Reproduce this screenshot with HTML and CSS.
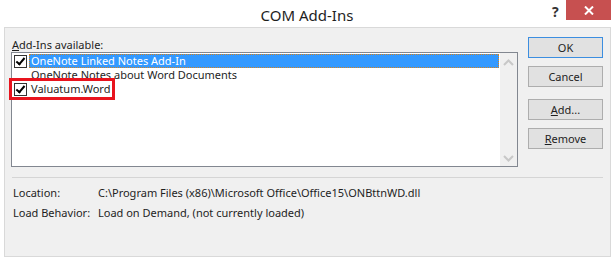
FILE: index.html
```html
<!DOCTYPE html>
<html lang="en">
<head>
  <meta charset="UTF-8" />
  <title>COM Add-Ins</title>
  <link rel="stylesheet" href="styles.css">
</head>
<body>
  <div class="ventana">
    <div class="titulo">
      <span class="titulo-texto">COM Add-Ins</span>
      <span class="ayuda">?</span>
      <span class="cerrar">
        <svg width="10" height="9" viewBox="0 0 10 9"><path d="M1 0.5 L9 8.5 M9 0.5 L1 8.5" stroke="#fff" stroke-width="2"/></svg>
      </span>
    </div>

    <div class="cliente">
      <div class="arriba">
        <div class="izquierda">
          <div class="etiqueta"><u>A</u>dd-Ins available:</div>
          <div class="lista">
            <div class="items">
              <div class="item">
                <span class="check marcado"></span>
                <span class="nombre activo">OneNote Linked Notes Add-In</span>
              </div>
              <div class="item">
                <span class="check"></span>
                <span class="nombre">OneNote Notes about Word Documents</span>
              </div>
              <div class="item">
                <span class="check marcado"></span>
                <span class="nombre">Valuatum.Word</span>
              </div>
              <div class="marca-roja"></div>
            </div>
            <div class="scroll">
              <svg width="11" height="7" viewBox="0 0 11 7"><path d="M1 6 L5.5 1.5 L10 6" fill="none" stroke="#c8c8c8" stroke-width="2"/></svg>
              <svg width="11" height="7" viewBox="0 0 11 7"><path d="M1 1 L5.5 5.5 L10 1" fill="none" stroke="#c8c8c8" stroke-width="2"/></svg>
            </div>
          </div>
        </div>

        <div class="botones">
          <button class="boton defecto">OK</button>
          <button class="boton">Cancel</button>
          <button class="boton separado"><u>A</u>dd...</button>
          <button class="boton"><u>R</u>emove</button>
        </div>
      </div>

      <div class="separador"></div>

      <div class="info">
        <div class="fila"><span class="clave">Location:</span><span>C:\Program Files (x86)\Microsoft Office\Office15\ONBttnWD.dll</span></div>
        <div class="fila"><span class="clave">Load Behavior:</span><span>Load on Demand, (not currently loaded)</span></div>
      </div>
    </div>
  </div>
</body>
</html>
```

FILE: styles.css
```css
/* Dialogo estilo Windows 8 */
body {
  margin: 0;
  background: #fff;
  font-family: 'Noto Sans', 'Open Sans', sans-serif;
  font-size: 11px;
  color: #1e1e1e;
}
.ventana {
  width: 614px;
  height: 260px;
  background: #fff;
  display: flex;
  flex-direction: column;
}
.titulo {
  height: 27px;
  position: relative;
  display: flex;
  justify-content: center;
  align-items: center;
}
.titulo-texto {
  font-size: 15px;
  color: #1e1e1e;
  margin-top: 2px;
}
.ayuda {
  position: absolute;
  left: 552px;
  top: 2px;
  font-weight: bold;
  font-size: 14px;
  color: #333;
}
.cerrar {
  position: absolute;
  left: 566px;
  top: 0;
  width: 45px;
  height: 20px;
  background: #c75050;
  display: flex;
  align-items: center;
  justify-content: center;
}
.cliente {
  margin: 0 3px 3px 4px;
  flex: 1;
  background: #f0f0f0;
  border: 1px solid #d9d9d9;
  display: flex;
  flex-direction: column;
  padding: 0 7px 0 6px;
}
.arriba {
  display: flex;
  gap: 10px;
}
.izquierda {
  width: 508px;
}
.etiqueta {
  margin: 9px 0 0 1px;
  height: 15px;
  line-height: 15px;
}
.lista {
  height: 113px;
  border: 1px solid #828790;
  background: #fff;
  display: flex;
}
.items {
  flex: 1;
  position: relative;
  padding-top: 1px;
}
.item {
  height: 14px;
  display: flex;
  align-items: center;
}
.check {
  width: 11px;
  height: 11px;
  margin: 0 2px;
  border: 1px solid #fff;
  background: #fff;
  position: relative;
}
.check.marcado {
  border-color: #333;
}
.check.marcado::after {
  content: "";
  position: absolute;
  left: 3px;
  top: 0px;
  width: 3px;
  height: 7px;
  border: solid #000;
  border-width: 0 2px 2px 0;
  transform: rotate(40deg);
}
.nombre {
  height: 14px;
  line-height: 14px;
  padding: 0 2px;
  white-space: nowrap;
}
.nombre.activo {
  flex: 1;
  background: #3399ff;
  color: #fff;
  outline: 1px dotted #d4821e;
  outline-offset: -1px;
  margin-right: 1px;
}
.marca-roja {
  position: absolute;
  left: -3px;
  top: 25px;
  width: 100px;
  height: 16px;
  border: 3px solid #e8141e;
}
.scroll {
  width: 17px;
  background: #f0f0f0;
  display: flex;
  flex-direction: column;
  justify-content: space-between;
  align-items: center;
  padding: 6px 0 4px;
}
.botones {
  display: flex;
  flex-direction: column;
  padding-top: 9px;
}
.boton {
  width: 75px;
  height: 21px;
  margin-bottom: 8px;
  background: #e1e1e1;
  border: 1px solid #adadad;
  font-family: inherit;
  font-size: 11px;
  color: #1e1e1e;
  padding: 0;
}
.boton.defecto {
  border-color: #3c8ee0;
}
.boton.separado {
  margin-top: 4px;
}
.separador {
  height: 1px;
  background: #d5d5d5;
  margin: 10px 0 0 1px;
}
.info {
  padding: 5px 0 0 2px;
}
.fila {
  height: 20px;
  line-height: 20px;
  display: flex;
}
.clave {
  width: 85px;
}
```
